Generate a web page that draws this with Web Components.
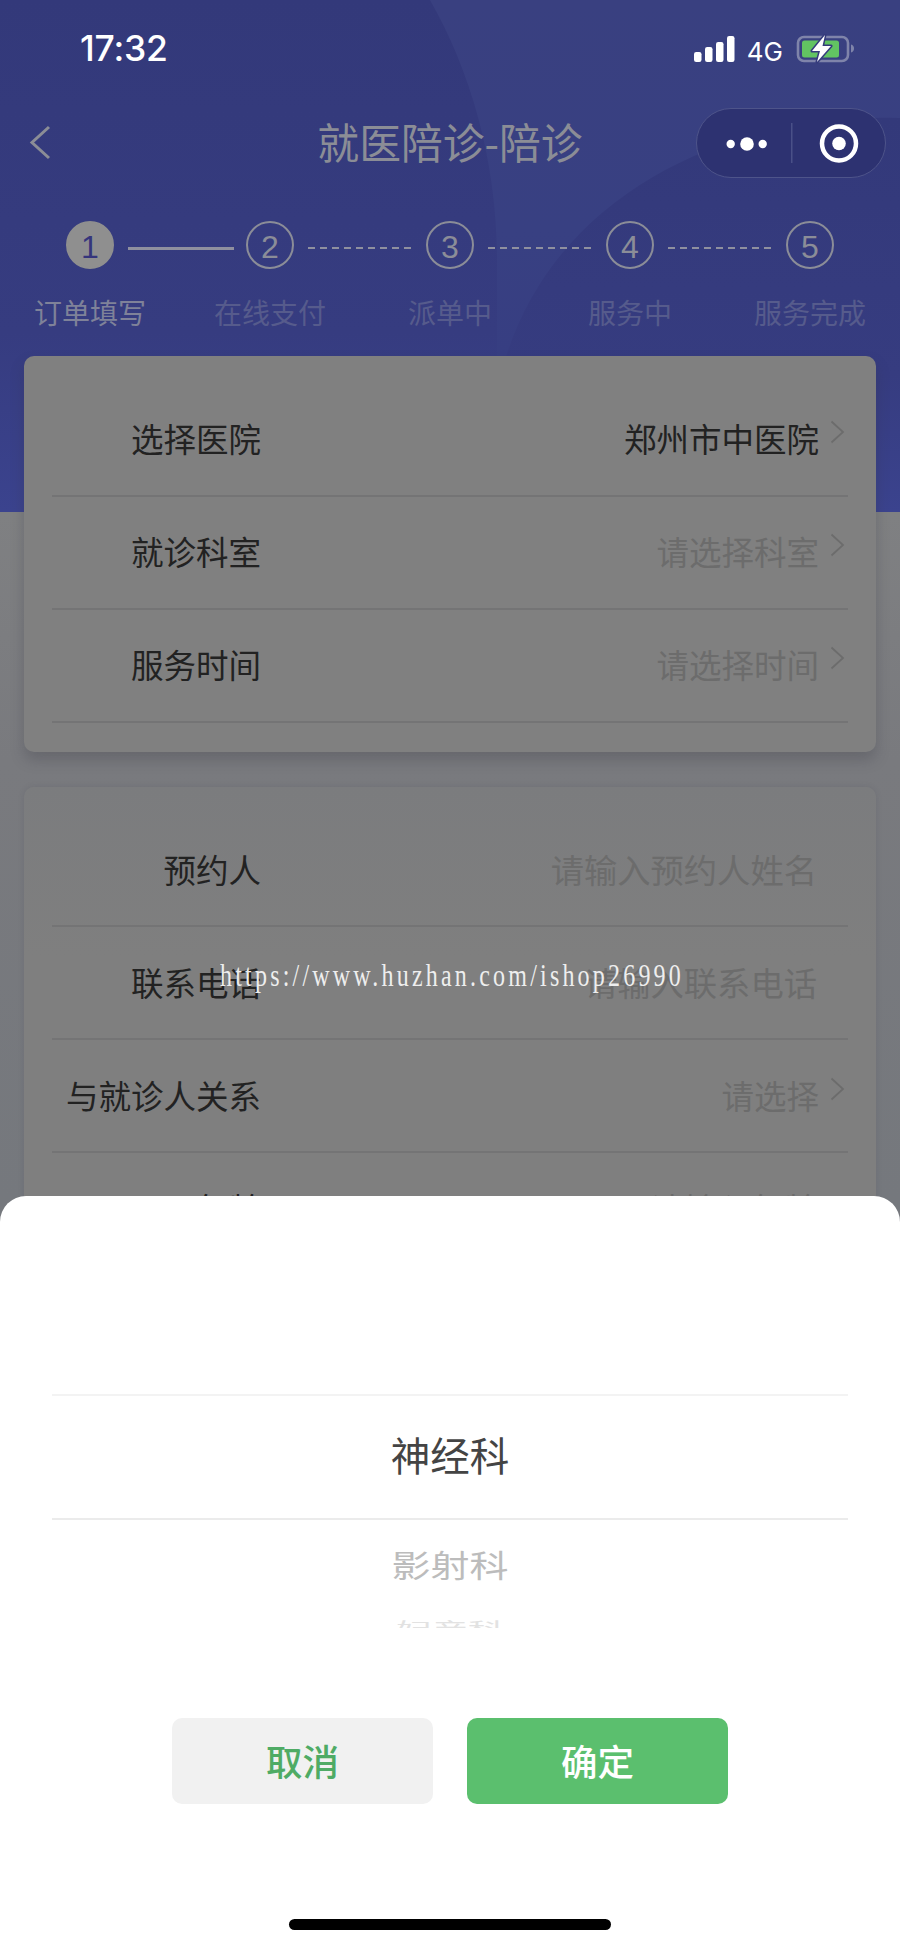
<!DOCTYPE html>
<html lang="zh-CN">
<head>
<meta charset="utf-8">
<title>就医陪诊-陪诊</title>
<style>
html,body{margin:0;padding:0;background:#777a80}
body{font-family:"Noto Sans CJK SC","Liberation Sans",sans-serif}
</style>
</head>
<body>
<x-app>
  <x-status-bar></x-status-bar>
  <x-nav-bar>就医陪诊-陪诊</x-nav-bar>
  <x-steps></x-steps>
  <x-card style="margin-top:26px;--pt:28px;--pb:29px;--rb:5px" shadow>
    <x-row arrow><span slot="label">选择医院</span><span slot="value">郑州市中医院</span></x-row>
    <x-row arrow empty><span slot="label">就诊科室</span><span slot="value">请选择科室</span></x-row>
    <x-row arrow empty><span slot="label">服务时间</span><span slot="value">请选择时间</span></x-row>
  </x-card>
  <x-card style="margin-top:35px;--pt:27px;--pb:30px;--rb:3px">
    <x-row empty><span slot="label">预约人</span><span slot="value">请输入预约人姓名</span></x-row>
    <x-row empty><span slot="label">联系电话</span><span slot="value">请输入联系电话</span></x-row>
    <x-row arrow empty><span slot="label">与就诊人关系</span><span slot="value">请选择</span></x-row>
    <x-row empty><span slot="label">年龄</span><span slot="value">请输入年龄</span></x-row>
  </x-card>
  <x-watermark slot="over">https://www.huzhan.com/ishop26990</x-watermark>
  <x-sheet slot="over">
    <span slot="selected">神经科</span>
    <span slot="next">影射科</span>
    <span slot="far">妇产科</span>
    <span slot="cancel">取消</span>
    <span slot="ok">确定</span>
  </x-sheet>
</x-app>
<script>
function def(name, html){
  customElements.define(name, class extends HTMLElement{
    constructor(){ super(); this.attachShadow({mode:'open'}).innerHTML = html; }
  });
}
const CJK = '"Noto Sans CJK SC","Liberation Sans",sans-serif';

def('x-app', `<style>
:host{display:block;position:relative;width:900px;height:1948px;overflow:hidden;
  background:linear-gradient(#7f8082 512px,#797a7e 760px,#75787d 1200px);font-family:${CJK}}
.bg{position:absolute;left:0;top:0;width:900px;height:512px;display:block}
.flow{position:relative}
</style>
<svg class="bg" viewBox="0 0 900 512" aria-hidden="true">
  <defs><linearGradient id="g" x1="0" y1="0" x2="0" y2="1">
    <stop offset="0" stop-color="#33397a"/><stop offset=".65" stop-color="#363c80"/><stop offset="1" stop-color="#3b438e"/></linearGradient>
  <linearGradient id="l" x1="0" y1="0" x2="0" y2="1">
    <stop offset="0" stop-color="#394080"/><stop offset=".45" stop-color="#384082"/><stop offset=".7" stop-color="#373e82"/><stop offset="1" stop-color="#3b438e"/></linearGradient></defs>
  <rect width="900" height="512" fill="url(#g)"/>
  <path d="M430 0C470 70 497 160 497 260V512H900V0Z" fill="url(#l)"/>
  <path d="M900 118C750 112 560 180 505 360C495 400 490 460 490 512H900Z" fill="url(#g)"/>
</svg>
<div class="flow"><slot></slot></div>
<slot name="over"></slot>`);

def('x-status-bar', `<style>
:host{display:flex;align-items:center;height:108px;box-sizing:border-box;padding:0 46px 10px 80px;color:#fff;font-family:Inter,"Liberation Sans",sans-serif}
.t{font-size:35.500px;font-weight:500;letter-spacing:-.2px;line-height:1;flex:1}
.g{font-size:26px;margin:0 13px 0 10px;line-height:1;padding-top:5px}
svg{display:block}
</style>
<span class="t">17:32</span>
<svg width="42" height="27" viewBox="0 0 42 27" style="margin-right:1px">
  <rect x="0" y="16" width="7.500" height="10" rx="2.200" fill="#fff"/>
  <rect x="11" y="11" width="7.500" height="15" rx="2.200" fill="#fff"/>
  <rect x="22" y="6" width="7.500" height="20" rx="2.200" fill="#fff"/>
  <rect x="33" y="0" width="7.500" height="26" rx="2.200" fill="#fff"/>
</svg>
<span class="g">4G</span>
<svg width="58" height="30" viewBox="796 35 58 30">
  <rect x="798" y="38" width="50" height="24" rx="6" fill="none" stroke="#7f84aa" stroke-width="2.600"/>
  <rect x="802" y="41.500" width="37" height="17" rx="2.500" fill="#62c462"/>
  <path d="M851 45.500c2 .5 3 2 3 4s-1 3.500-3 4z" fill="#7f84aa"/>
  <path d="M825 36 812 52H820L817 63 831 47H822.500Z" fill="#fff" stroke="#353b7c" stroke-width="3" stroke-linejoin="round" paint-order="stroke"/>
</svg>`);

def('x-nav-bar', `<style>
:host{display:grid;grid-template-columns:1fr auto 1fr;align-items:center;height:70px;color:#8b8d96}
svg{display:block}
.back{margin-left:29px}
.title{font-size:41.800px;line-height:70px;white-space:nowrap;transform:translateY(-2px)}
.cap{justify-self:end;margin-right:14px;width:190px;height:70px;box-sizing:border-box;border:1.500px solid #4e548a;border-radius:35px;background:#2d3271;
  display:flex;align-items:center}
</style>
<svg class="back" width="24" height="36" viewBox="0 0 24 36"><path d="M20 2 3 17.500 20 33" fill="none" stroke="#8b8d96" stroke-width="3"/></svg>
<div class="title"><slot></slot></div>
<div class="cap">
  <svg width="188" height="67" viewBox="696 110 188 67">
    <circle cx="729.700" cy="144" r="4.200" fill="#fff"/><circle cx="746" cy="144" r="6.800" fill="#fff"/><circle cx="761.700" cy="144" r="4.200" fill="#fff"/>
    <rect x="790" y="123" width="1.500" height="40" fill="#4a5088"/>
    <circle cx="838" cy="143.500" r="17" fill="none" stroke="#fff" stroke-width="4.500"/><circle cx="838" cy="143.500" r="6.800" fill="#fff"/>
  </svg>
</div>`);

def('x-steps', `<style>
:host{display:block;margin-top:43px}
.c{display:flex;align-items:center;padding-left:66px}
.n{width:48px;height:48px;box-sizing:border-box;border:2.400px solid #8b8d98;border-radius:50%;display:flex;align-items:center;justify-content:center;
  font:32px/1 "Liberation Sans",sans-serif;color:#8b8d98;flex:none;padding-top:3px}
.n.on{background:#8f8f8f;border-color:#8f8f8f;color:#35357c}
.l{width:106px;height:3px;margin:6px 12px 0 14px;flex:none;background:#8f909f}
.l.d{height:2.400px;background:repeating-linear-gradient(90deg,#8f909f 0 7px,transparent 7px 12px)}
.t{display:grid;grid-template-columns:repeat(5,180px);margin-top:26px;font-size:28px;line-height:34px;text-align:center;color:#565b8c;white-space:nowrap;padding-bottom:1px}
.t .on{color:#7f8299}
</style>
<div class="c">
  <span class="n on">1</span><i class="l"></i><span class="n">2</span><i class="l d"></i><span class="n">3</span><i class="l d"></i><span class="n">4</span><i class="l d"></i><span class="n">5</span>
</div>
<div class="t"><span class="on">订单填写</span><span>在线支付</span><span>派单中</span><span>服务中</span><span>服务完成</span></div>`);

def('x-card', `<style>
:host{display:block;margin:0 24px;padding:var(--pt) 28px var(--pb);background:linear-gradient(#7b7c7e,#7f7f7f 170px);border-radius:10px;box-shadow:0 0 6px rgba(60,60,70,.14);position:relative}
:host([shadow]){background:#808080;box-shadow:0 8px 14px rgba(50,52,60,.26)}
</style><slot></slot>`);

def('x-row', `<style>
:host{display:flex;align-items:center;height:113px;box-sizing:border-box;border-bottom:2px solid #747475;font-size:32.500px;color:#222;padding-bottom:var(--rb)}
.lab{width:209px;text-align:right;white-space:nowrap;flex:none}
.val{flex:1;text-align:right;white-space:nowrap;padding-right:31px;font-size:33.300px}
:host([empty]) .val{color:#6c6c6c}
.ch{display:none;flex:none;margin:0 3px 10px 0}
:host([arrow]) .ch{display:block}
:host([arrow]) .val{padding-right:11px;font-size:32.500px}
</style>
<div class="lab"><slot name="label"></slot></div>
<div class="val"><slot name="value"></slot></div>
<svg class="ch" width="15" height="24" viewBox="0 0 15 24"><path d="M1.500 1.500 13 12 1.500 22.500" fill="none" stroke="#6c6c6c" stroke-width="1.800"/></svg>`);

def('x-watermark', `<style>
:host{position:absolute;left:220px;top:961px;font:24px/30px "Liberation Serif",serif;letter-spacing:3.200px;color:#eee;white-space:nowrap;transform:scaleY(1.3)}
</style><slot></slot>`);

def('x-sheet', `<style>
:host{position:absolute;left:0;top:1196px;width:900px;height:752px;background:#fff;border-radius:26px 26px 0 0;font-family:${CJK};text-align:center}
.picker{height:432px;margin:0 52px;overflow:hidden;padding-top:198px;box-sizing:border-box}
.sel{height:126px;box-sizing:border-box;border-top:2px solid #f3f3f3;border-bottom:2px solid #ebebeb;font-size:39.500px;line-height:116px;color:#444}
.next{height:90px;line-height:86px;font-size:39px;color:#bcbcbc;display:block}
.next span,.far span{display:inline-block}
.next span{transform:scaleY(.8);}
.far{padding-top:9px;line-height:1;font-size:36px;color:#e2e2e2}
.far span{transform:scaleY(.45);transform-origin:top}
.btns{display:flex;justify-content:center;gap:34px;margin-top:90px}
.b{width:261px;height:86px;border-radius:10px;font-size:36.500px;font-weight:500;line-height:86px}
.c{background:#f1f1f1;color:#4fab65}
.o{background:#5bbf6e;color:#fff}
.home{width:322px;height:11px;background:#000;border-radius:6px;margin:115px auto 0}
</style>
<div class="picker">
  <div class="sel"><slot name="selected"></slot></div>
  <div class="next"><span><slot name="next"></slot></span></div>
  <div class="far"><span><slot name="far"></slot></span></div>
</div>
<div class="btns"><div class="b c"><slot name="cancel"></slot></div><div class="b o"><slot name="ok"></slot></div></div>
<div class="home"></div>`);
</script>
</body>
</html>
